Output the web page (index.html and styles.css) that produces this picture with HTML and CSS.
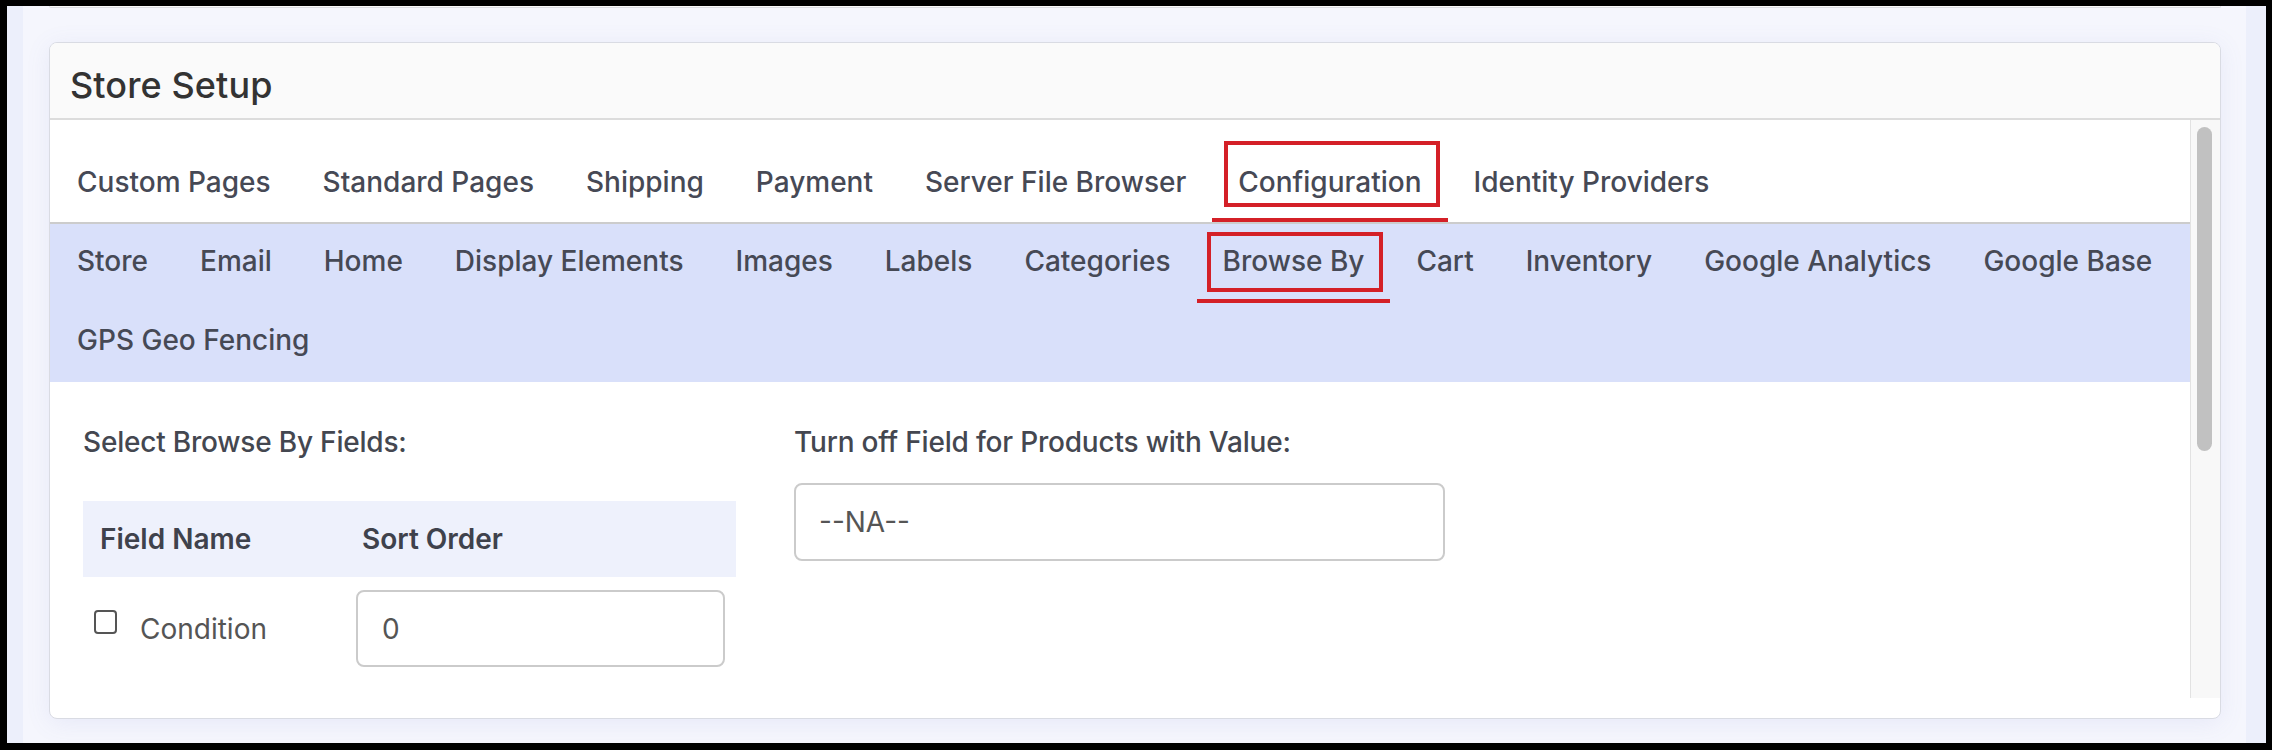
FILE: index.html
```html
<!DOCTYPE html>
<html lang="en">
<head>
<meta charset="utf-8">
<title>Store Setup</title>
<link rel="stylesheet" href="styles.css">
</head>
<body>
<div class="frame">
  <div class="page">
    <div class="prev-card"></div>
    <section class="card">
      <header class="card-header"><h1 class="card-title">Store Setup</h1></header>
      <div class="card-body">
        <div class="scroll-content">
          <nav class="tabs">
            <a class="tab">Custom Pages</a>
            <a class="tab">Standard Pages</a>
            <a class="tab">Shipping</a>
            <a class="tab">Payment</a>
            <a class="tab">Server File Browser</a>
            <a class="tab tab-active">Configuration<span class="mark mark-config"></span></a>
            <a class="tab">Identity Providers</a>
          </nav>
          <nav class="subtabs">
            <a class="subtab">Store</a>
            <a class="subtab">Email</a>
            <a class="subtab">Home</a>
            <a class="subtab">Display Elements</a>
            <a class="subtab">Images</a>
            <a class="subtab">Labels</a>
            <a class="subtab">Categories</a>
            <a class="subtab subtab-active">Browse By<span class="mark mark-browse"></span></a>
            <a class="subtab">Cart</a>
            <a class="subtab">Inventory</a>
            <a class="subtab">Google Analytics</a>
            <a class="subtab">Google Base</a>
            <span class="row-break"></span>
            <a class="subtab">GPS Geo Fencing</a>
          </nav>
          <div class="form-area">
            <div class="col">
              <div class="label">Select Browse By Fields:</div>
              <div class="table">
                <div class="th th-name">Field Name</div>
                <div class="th th-sort">Sort Order</div>
                <div class="td td-name"><span class="checkbox"></span><span class="cond">Condition</span></div>
                <div class="td td-sort"><div class="input input-sort">0</div></div>
              </div>
            </div>
            <div class="col">
              <div class="label">Turn off Field for Products with Value:</div>
              <div class="input input-na">--NA--</div>
            </div>
          </div>
        </div>
        <div class="scroll-track"><div class="scroll-thumb"></div></div>
      </div>
      <div class="card-foot"></div>
    </section>
  </div>
</div>
</body>
</html>
```

FILE: styles.css
```css
* { box-sizing: border-box; }
html, body { margin: 0; padding: 0; }
body {
  background: #000;
  font-family: Inter, "Open Sans", "Liberation Sans", sans-serif;
  width: 2272px;
  height: 750px;
  overflow: hidden;
}
.frame {
  margin: 6px 6px 7px 7px;
  height: 737px;
  background: #eceffb;
  display: flex;
}
.page {
  margin-left: 16px;
  margin-right: 20px;
  flex: 1;
  background: #f5f6fd;
  padding: 0 25px 0 26px;
}
.prev-card {
  height: 2px;
  background: #fafafa;
  border: 1px solid #dddde3;
  border-top: none;
  border-radius: 0 0 8px 8px;
}
.card {
  margin-top: 34px;
  background: #fff;
  border: 1px solid #d9dbe3;
  border-radius: 8px;
  box-shadow: 0 4px 24px rgba(110, 120, 200, 0.10);
  overflow: hidden;
}
.card-header {
  height: 77px;
  background: #fafafa;
  border-bottom: 2px solid #dcdcdc;
  display: flex;
  align-items: center;
  padding: 8px 0 0 20px;
}
.card-title {
  margin: 0;
  font-size: 36px;
  font-weight: 500;
  color: #333;
  letter-spacing: 0.1px;
}
.card-body {
  display: flex;
  height: 578px;
}
.scroll-content {
  flex: 1;
  overflow: hidden;
}
.scroll-track {
  width: 30px;
  background: #f8f8f8;
  border-left: 1px solid #e2e2e2;
  padding-top: 7px;
}
.scroll-thumb {
  width: 15px;
  height: 324px;
  margin-left: 6px;
  background: #c1c1c1;
  border-radius: 8px;
}
.card-foot { height: 20px; }

.tabs {
  display: flex;
  padding: 27px 0 0 1px;
  border-bottom: 2px solid #cccccc;
}
.tab, .subtab {
  position: relative;
  display: block;
  padding: 0 26px;
  font-size: 28px;
  font-weight: 500;
  color: #464955;
  white-space: nowrap;
  border-bottom: 4px solid transparent;
}
.tab { line-height: 71px; }
.tab-active, .subtab-active { border-bottom-color: #d42027; }
.subtabs {
  display: flex;
  flex-wrap: wrap;
  background: #d9e0fa;
  padding-left: 1px;
}
.subtab { line-height: 75px; }
.row-break { flex-basis: 100%; height: 0; }
.mark {
  position: absolute;
  border: 4px solid #d42027;
  pointer-events: none;
}
.mark-config { left: 12px; right: 8px; top: -6px; bottom: 11px; }
.mark-browse { left: 10px; right: 7px; top: 8px; bottom: 7px; }

.form-area {
  display: grid;
  grid-template-columns: 653px 651px;
  column-gap: 58px;
  padding: 43px 0 0 33px;
}
.label {
  font-size: 28px;
  line-height: 34px;
  font-weight: 500;
  color: #444750;
  letter-spacing: -0.2px;
}
.table {
  margin-top: 42px;
  display: grid;
  grid-template-columns: 262px 391px;
}
.th {
  background: #eef1fc;
  height: 76px;
  display: flex;
  align-items: center;
  padding-left: 17px;
  font-size: 28px;
  font-weight: 600;
  color: #3f424c;
}
.td {
  padding-top: 13px;
  display: flex;
  align-items: flex-start;
}
.td-name { padding-left: 11px; padding-top: 33px; }
.td-sort { padding-left: 11px; }
.checkbox {
  width: 23px;
  height: 24px;
  border: 2px solid #555;
  border-radius: 4px;
  background: #fff;
  flex: none;
}
.cond {
  margin-left: 23px;
  font-size: 28px;
  line-height: 30px;
  color: #555;
  margin-top: 4px;
}
.input {
  border: 2px solid #cbcbcb;
  border-radius: 8px;
  background: #fff;
  display: flex;
  align-items: center;
  font-size: 28px;
  color: #555;
}
.input-sort {
  width: 369px;
  height: 77px;
  padding-left: 24px;
}
.input-na {
  margin-top: 24px;
  width: 651px;
  height: 78px;
  padding-left: 23px;
}
```
